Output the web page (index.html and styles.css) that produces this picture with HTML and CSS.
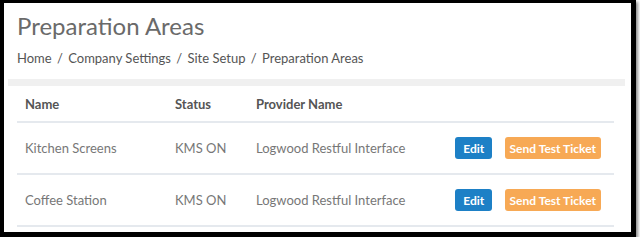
FILE: index.html
```html
<!DOCTYPE html>
<html lang="en">
<head>
    <meta charset="UTF-8">
    <title>Preparation Areas</title>
    <link rel="stylesheet" href="styles.css">
</head>
<body>
    <div class="frame">
        <h1>Preparation Areas</h1>
        <div class="breadcrumb">
            <a href="#">Home</a> <span class="sep">/</span>
            <a href="#">Company Settings</a> <span class="sep">/</span>
            <a href="#">Site Setup</a> <span class="sep">/</span>
            <span>Preparation Areas</span>
        </div>
        <div class="band"></div>
        <table class="areas">
            <thead>
                <tr>
                    <th class="col-name">Name</th>
                    <th class="col-status">Status</th>
                    <th>Provider Name</th>
                    <th></th>
                </tr>
            </thead>
            <tbody>
                <tr>
                    <td>Kitchen Screens</td>
                    <td>KMS ON</td>
                    <td>Logwood Restful Interface</td>
                    <td class="actions">
                        <button class="btn btn-edit">Edit</button>
                        <button class="btn btn-test">Send Test Ticket</button>
                    </td>
                </tr>
                <tr>
                    <td>Coffee Station</td>
                    <td>KMS ON</td>
                    <td>Logwood Restful Interface</td>
                    <td class="actions">
                        <button class="btn btn-edit">Edit</button>
                        <button class="btn btn-test">Send Test Ticket</button>
                    </td>
                </tr>
            </tbody>
        </table>
    </div>
</body>
</html>
```

FILE: styles.css
```css
body {
    margin: 0;
    background: #fff;
    font-family: Lato, "Liberation Sans", sans-serif;
}
.frame {
    box-sizing: border-box;
    width: 636px;
    height: 237px;
    border-style: solid;
    border-color: #000;
    border-width: 3px 5px 5px 4px;
    box-shadow: 2px 2px 3px rgba(0,0,0,0.45);
    background: #fff;
    overflow: hidden;
}
h1 {
    margin: 0;
    padding: 8px 0 0 13px;
    font-size: 24px;
    font-weight: 400;
    line-height: 30px;
    color: #6a6a6a;
}
.breadcrumb {
    padding: 8px 0 0 13px;
    font-size: 13px;
    line-height: 18px;
    color: #555;
}
.breadcrumb a {
    color: #555;
    text-decoration: none;
}
.breadcrumb .sep {
    margin: 0 2px;
}
.band {
    margin: 12px 6px 0 4px;
    height: 7px;
    background: #f0f0f0;
}
.areas {
    margin-left: 13px;
    width: 597px;
    border-collapse: collapse;
    font-size: 13px;
    color: #777;
}
.areas th {
    text-align: left;
    font-weight: 700;
    color: #555;
    height: 35px;
    padding: 0 0 0 8px;
    border-bottom: 2px solid #e5e9ee;
}
.areas td {
    height: 50px;
    padding: 0 0 0 8px;
    border-bottom: 2px solid #e5e9ee;
}
.col-name {
    width: 142px;
}
.col-status {
    width: 73px;
}
.actions {
    text-align: right;
    padding-right: 13px !important;
    white-space: nowrap;
}
.btn {
    height: 22px;
    border: none;
    border-radius: 3px;
    color: #fff;
    font-family: inherit;
    font-size: 12px;
    font-weight: 700;
    padding: 0 8px;
    vertical-align: middle;
}
.btn-edit {
    background: #1d80c6;
}
.btn-test {
    background: #f7a955;
    margin-left: 9px;
    padding: 0 5px;
}
```
